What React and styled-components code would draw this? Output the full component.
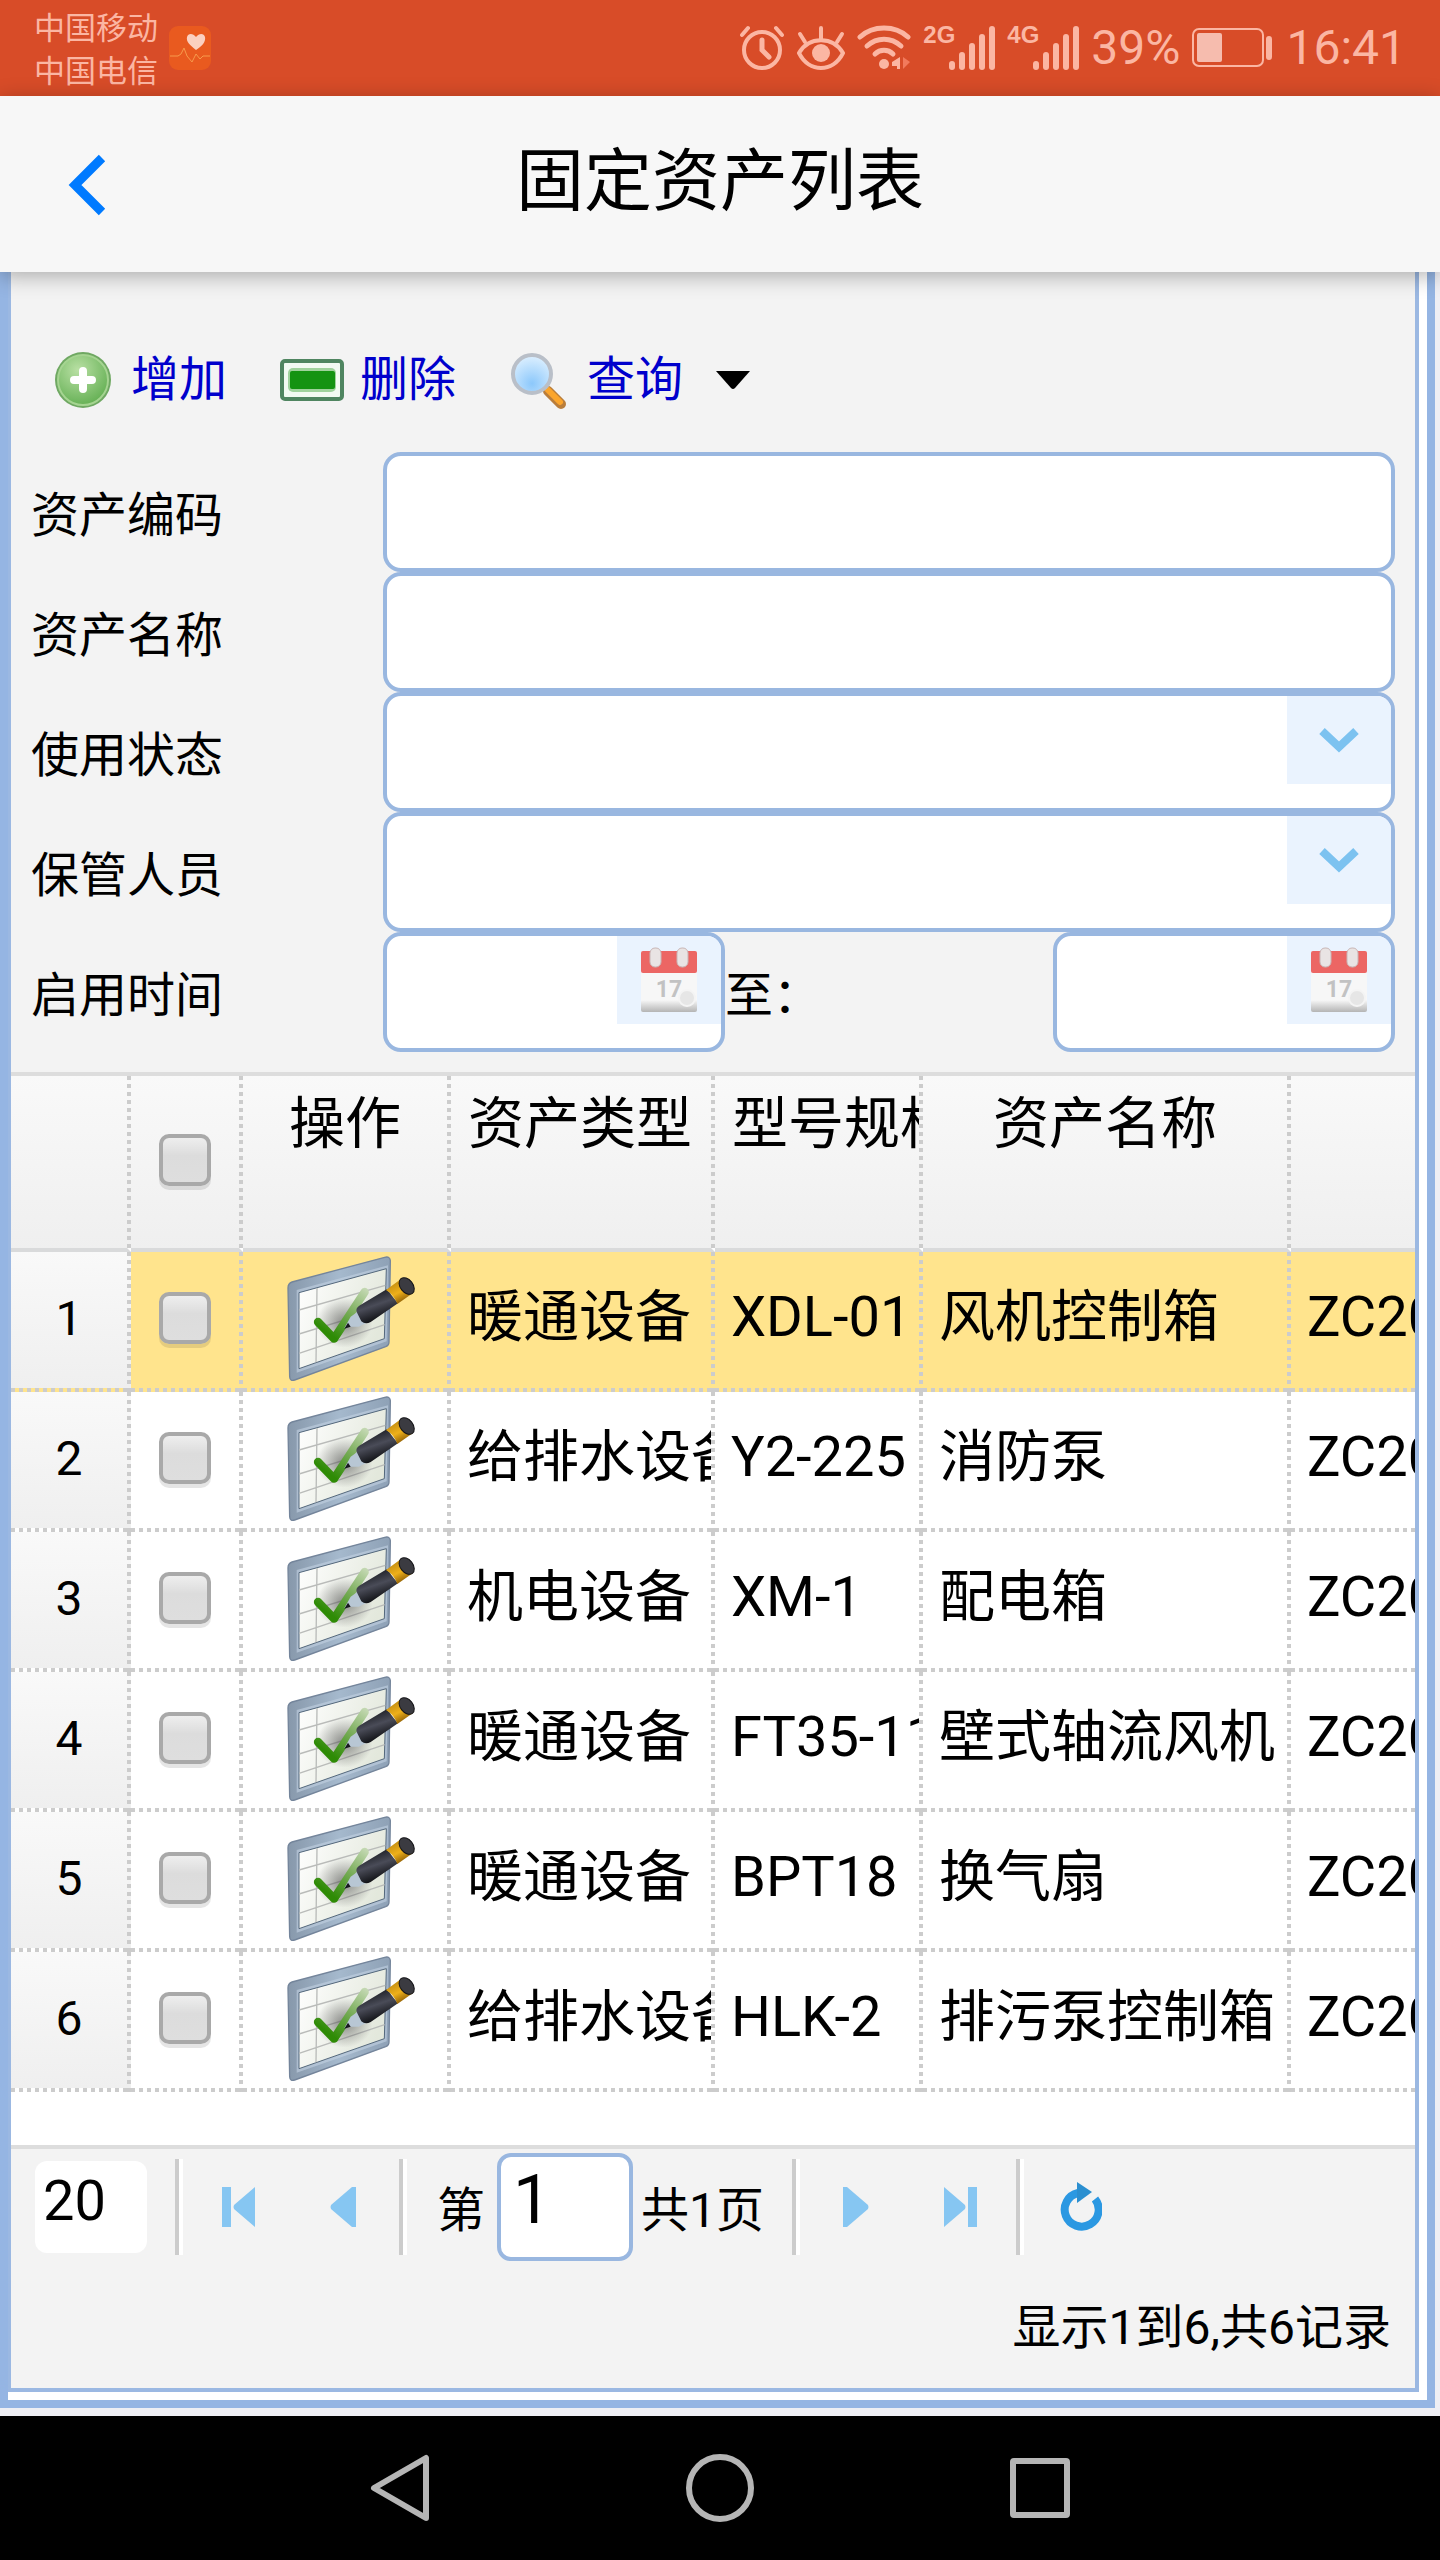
import styled, { createGlobalStyle, css } from "styled-components";

const ROWS = [
  { type: "暖通设备", model: "XDL-01", name: "风机控制箱", code: "ZC20" },
  { type: "给排水设备", model: "Y2-225", name: "消防泵", code: "ZC20" },
  { type: "机电设备", model: "XM-1", name: "配电箱", code: "ZC20" },
  { type: "暖通设备", model: "FT35-11", name: "壁式轴流风机", code: "ZC20" },
  { type: "暖通设备", model: "BPT18", name: "换气扇", code: "ZC20" },
  { type: "给排水设备", model: "HLK-2", name: "排污泵控制箱", code: "ZC20" },
];

export default function App() {
  return (
    <Page>
      <GlobalStyle />
      <SharedGradients />
      <StatusBar />
      <Header>
        <BackButton type="button" aria-label="返回">
          <svg width="40" height="64" viewBox="0 0 40 64" fill="none">
            <path d="M36 6 L9 33 L36 60" stroke="#007aff" strokeWidth="9" />
          </svg>
        </BackButton>
        <h1>固定资产列表</h1>
      </Header>
      <Body>
        <OuterPanel>
          <InnerPanel>
            <Toolbar />
            <SearchForm />
            <AssetGrid />
            <Pager />
          </InnerPanel>
        </OuterPanel>
      </Body>
      <NavBar />
    </Page>
  );
}

function StatusBar() {
  return (
    <StyledStatusBar>
      <Carriers>
        <span>中国移动</span>
        <span>中国电信</span>
      </Carriers>
      <svg width="44" height="46" viewBox="0 0 44 46">
        <rect x="1" y="1" width="42" height="44" rx="9" fill="#e95a1f" />
        <path
          d="M28 25 C22 20 18 17 19 12 C20 8 25 8 28 12 C31 8 36 8 37 12 C38 17 34 21 28 25Z"
          fill="#fbd0c0"
        />
        <path
          d="M2 31 H10 L13 29 L16 23 L19 31 L24 37 L28 29 L32 34 L35 31 H42"
          fill="none"
          stroke="#f79a4c"
          strokeWidth="1"
        />
      </svg>
      <StatusIcons>
        <svg width="46" height="46" viewBox="0 0 46 46" fill="none" stroke="#fbb6a3" strokeWidth="4" strokeLinecap="round">
          <circle cx="23" cy="25" r="18" />
          <path d="M23 15 V25 L30 32" strokeWidth="5" />
          <path d="M3 10 L9 3 M37 3 L43 10" />
        </svg>
        <svg width="48" height="46" viewBox="0 0 48 46" fill="none" stroke="#fbb6a3" strokeWidth="4" strokeLinecap="round">
          <path d="M2 28 C12 11 36 11 46 28 C36 48 12 48 2 28Z" />
          <circle cx="24" cy="28" r="9" fill="#fbb6a3" stroke="none" />
          <path d="M24 3 V14 M3 9 L8 17 M45 9 L40 17" />
        </svg>
        <svg width="54" height="46" viewBox="0 0 54 46" fill="none" stroke="#fbb6a3" strokeWidth="5" strokeLinecap="round">
          <path d="M3 12 C16 0 38 0 51 12" />
          <path d="M10 21 C20 12 34 12 44 21" />
          <path d="M18 29 C23 24 31 24 36 29" />
          <circle cx="27" cy="39" r="5" fill="#fbb6a3" stroke="none" />
          <path d="M43 32 V44 H40 V41 H35 V37Z" fill="#fbb6a3" stroke="none" />
          <path d="M46 32 L53 37 L46 44Z" fill="#f27a5c" stroke="none" />
        </svg>
        <Signal label="2G" />
        <Signal label="4G" />
        <span>39%</span>
        <svg width="82" height="40" viewBox="0 0 82 40">
          <rect x="1" y="1" width="70" height="37" rx="6" fill="none" stroke="#fbb6a3" strokeWidth="2" />
          <rect x="5" y="5" width="25" height="29" rx="2" fill="#f6bcae" />
          <rect x="74" y="8" width="6" height="24" rx="3" fill="#fbb6a3" />
        </svg>
        <time>16:41</time>
      </StatusIcons>
    </StyledStatusBar>
  );
}

function Signal({ label }) {
  return (
    <SignalWrap>
      <small>{label}</small>
      <svg width="46" height="46" viewBox="0 0 46 46" fill="#fbb6a3">
        <rect x="0" y="36" width="6" height="9" rx="3" />
        <rect x="10" y="27" width="6" height="18" rx="3" />
        <rect x="20" y="18" width="6" height="27" rx="3" />
        <rect x="30" y="9" width="6" height="36" rx="3" />
        <rect x="40" y="1" width="6" height="44" rx="3" />
      </svg>
    </SignalWrap>
  );
}

function Toolbar() {
  return (
    <StyledToolbar>
      <a href="#add">
        <svg width="56" height="60" viewBox="0 0 56 60">
          <circle cx="28" cy="30" r="28" fill="#6fa862" />
          <circle cx="28" cy="30" r="25" fill="url(#addGreen)" stroke="#a5d491" strokeWidth="2" />
          <path d="M28 21 V39 M19 30 H37" stroke="#fff" strokeWidth="8" strokeLinecap="round" />
        </svg>
        增加
      </a>
      <a href="#delete">
        <svg width="64" height="42" viewBox="0 0 64 42">
          <rect x="2" y="2" width="60" height="38" rx="3" fill="#f2faf2" stroke="#4f8560" strokeWidth="4" />
          <rect x="8" y="9" width="48" height="24" rx="5" fill="#9fd29c" />
          <rect x="10" y="12" width="45" height="18" rx="2" fill="#149312" />
        </svg>
        删除
      </a>
      <a href="#search">
        <svg width="58" height="60" viewBox="0 0 58 60">
          <path d="M39 41 L52 54" stroke="#b97d3b" strokeWidth="10" strokeLinecap="round" />
          <path d="M39 40 L51 52" stroke="#fba52c" strokeWidth="6" strokeLinecap="round" />
          <circle cx="23" cy="24" r="19" fill="url(#lensBlue)" stroke="#b9bfc8" strokeWidth="4" />
        </svg>
        查询
        <svg className="caret" width="36" height="20" viewBox="0 0 36 20">
          <path d="M1 1 H35 L20 18 Q18 20 16 18Z" fill="#000" />
        </svg>
      </a>
    </StyledToolbar>
  );
}

function SearchForm() {
  return (
    <StyledForm onSubmit={(e) => e.preventDefault()}>
      <FormRow>
        <label htmlFor="code">资产编码</label>
        <Field>
          <input id="code" type="text" />
        </Field>
      </FormRow>
      <FormRow>
        <label htmlFor="name">资产名称</label>
        <Field>
          <input id="name" type="text" />
        </Field>
      </FormRow>
      <FormRow>
        <label htmlFor="state">使用状态</label>
        <Field>
          <select id="state">
            <option></option>
          </select>
          <ComboArrow />
        </Field>
      </FormRow>
      <FormRow>
        <label htmlFor="keeper">保管人员</label>
        <Field>
          <select id="keeper">
            <option></option>
          </select>
          <ComboArrow />
        </Field>
      </FormRow>
      <FormRow>
        <label htmlFor="from">启用时间</label>
        <DateRange>
          <Field $date>
            <input id="from" type="text" />
            <CalendarButton />
          </Field>
          <label htmlFor="to">至：</label>
          <Field $date>
            <input id="to" type="text" />
            <CalendarButton />
          </Field>
        </DateRange>
      </FormRow>
    </StyledForm>
  );
}

function ComboArrow() {
  return (
    <Addon as="span">
      <svg width="44" height="30" viewBox="0 0 44 30" fill="none">
        <path d="M5 6 L22 22 L39 6" stroke="#7cc2f0" strokeWidth="8" />
      </svg>
    </Addon>
  );
}

function CalendarButton() {
  return (
    <Addon type="button" aria-label="选择日期">
      <svg width="60" height="66" viewBox="0 0 60 66">
        <rect x="2" y="5" width="56" height="60" rx="2" fill="url(#calPaper)" />
        <rect x="2" y="4" width="56" height="22" rx="2" fill="#ec6664" />
        <rect x="11" y="1" width="11" height="19" rx="5" fill="#e9e4e4" stroke="#c9b6b6" />
        <rect x="38" y="1" width="11" height="19" rx="5" fill="#e9e4e4" stroke="#c9b6b6" />
        <text x="30" y="50" textAnchor="middle" fontSize="23" fontWeight="bold" fill="#c2c2c2">
          17
        </text>
        <circle cx="48" cy="51" r="8" fill="#e6e6e6" stroke="#f4f4f4" strokeWidth="2" />
      </svg>
    </Addon>
  );
}

function AssetGrid() {
  return (
    <GridWrap>
      <Table>
        <colgroup>
          <col width="120" />
          <col width="112" />
          <col width="208" />
          <col width="264" />
          <col width="208" />
          <col width="368" />
          <col />
        </colgroup>
        <thead>
          <tr>
            <HeadCell />
            <HeadCell $middle>
              <Checkbox type="checkbox" aria-label="全选" />
            </HeadCell>
            <HeadCell>操作</HeadCell>
            <HeadCell $left>资产类型</HeadCell>
            <HeadCell $left>型号规格</HeadCell>
            <HeadCell>资产名称</HeadCell>
            <HeadCell />
          </tr>
        </thead>
        <tbody>
          {ROWS.map((row, i) => (
            <Row key={i} $selected={i === 0}>
              <NumberCell>{i + 1}</NumberCell>
              <Cell $center>
                <Checkbox type="checkbox" aria-label={row.name} />
              </Cell>
              <Cell $center>
                <EditButton type="button" aria-label="编辑">
                  <EditIcon />
                </EditButton>
              </Cell>
              <Cell>{row.type}</Cell>
              <Cell>{row.model}</Cell>
              <Cell>{row.name}</Cell>
              <Cell>{row.code}</Cell>
            </Row>
          ))}
        </tbody>
      </Table>
    </GridWrap>
  );
}

function EditIcon() {
  return (
    <svg width="130" height="128" viewBox="50 50 390 384">
      <path
        d="M56 146 Q56 132 68 128 L346 54 Q362 50 363 64 L359 308 Q359 318 349 322 L76 422 Q62 427 61 412Z"
        fill="url(#frameBlue)"
        stroke="#74859b"
        strokeWidth="4"
      />
      <path d="M82 152 L356 78 L352 306 L82 400Z" fill="#c3d2e2" opacity="0.6" />
      <path d="M89 160 L351 88 L345 298 L89 388Z" fill="url(#boardWhite)" stroke="#54687c" strokeWidth="3" />
      <path
        d="M143 146 L140 369 M89 212 L348 138 M89 284 L347 205 M89 342 L346 256"
        stroke="#b9bbb9"
        strokeWidth="4"
        fill="none"
      />
      <ellipse cx="225" cy="250" rx="85" ry="75" fill="url(#softShadow)" />
      <path
        d="M146 248 L194 298 L286 158"
        fill="none"
        stroke="url(#checkGreen)"
        strokeWidth="25"
        strokeLinecap="round"
        strokeLinejoin="round"
      />
      <path d="M225 266 L244 232 L264 218 L292 250 L268 262 L240 262Z" fill="#b8c7d4" />
      <path d="M225 268 L236 250 L244 262Z" fill="#15181c" />
      <path d="M262 218 Q258 206 272 198 L352 150 L386 192 L304 248 Q288 256 276 246Z" fill="url(#penDark)" />
      <path d="M350 152 L394 120 L430 162 L384 194 Q374 166 350 152Z" fill="url(#penGold)" />
      <ellipse cx="412" cy="140" rx="19" ry="28" transform="rotate(-38 412 140)" fill="#3b3b41" stroke="#141417" strokeWidth="3" />
    </svg>
  );
}

function Pager() {
  return (
    <StyledPager>
      <PagerControls>
        <PageSize aria-label="每页条数" defaultValue="20">
          <option>20</option>
        </PageSize>
        <Separator />
        <PagerButton type="button" aria-label="首页">
          <svg width="36" height="42" viewBox="0 0 36 42" fill="#86c6f2">
            <path d="M1 1 H10 V41 H1Z M34 1 V41 L13 23 Q12 21 13 19Z" />
          </svg>
        </PagerButton>
        <PagerButton type="button" aria-label="上一页">
          <svg width="36" height="42" viewBox="0 0 36 42" fill="#86c6f2">
            <path d="M31 1 V41 H27 L6 23 Q5 21 6 19 L27 1Z" />
          </svg>
        </PagerButton>
        <Separator />
        <label htmlFor="page">第</label>
        <PageInput id="page" type="text" defaultValue="1" />
        <span>共1页</span>
        <Separator />
        <PagerButton type="button" aria-label="下一页">
          <svg width="36" height="42" viewBox="0 0 36 42" fill="#86c6f2">
            <path d="M5 1 V41 H9 L30 23 Q31 21 30 19 L9 1Z" />
          </svg>
        </PagerButton>
        <PagerButton type="button" aria-label="末页">
          <svg width="36" height="42" viewBox="0 0 36 42" fill="#86c6f2">
            <path d="M26 1 H35 V41 H26Z M2 1 V41 L23 23 Q24 21 23 19Z" />
          </svg>
        </PagerButton>
        <Separator />
        <PagerButton type="button" aria-label="刷新">
          <svg width="44" height="50" viewBox="0 0 44 50" fill="none">
            <path d="M20 11 A17 17 0 1 0 37 17" stroke="#2b98e2" strokeWidth="8" />
            <path d="M19 0 L34 10 L19 21Z" fill="#2b8fd0" />
          </svg>
        </PagerButton>
      </PagerControls>
      <p>显示1到6,共6记录</p>
    </StyledPager>
  );
}

function NavBar() {
  return (
    <StyledNavBar>
      <button type="button" aria-label="后退">
        <svg width="70" height="70" viewBox="0 0 70 70">
          <path d="M9 35 L61 5 V65Z" />
        </svg>
      </button>
      <button type="button" aria-label="主屏幕">
        <svg width="70" height="70" viewBox="0 0 70 70">
          <circle cx="35" cy="35" r="31" />
        </svg>
      </button>
      <button type="button" aria-label="最近任务">
        <svg width="70" height="70" viewBox="0 0 70 70">
          <rect x="8" y="8" width="54" height="54" rx="1" />
        </svg>
      </button>
    </StyledNavBar>
  );
}

// gradients used by several icons, kept in one place so ids stay unique
function SharedGradients() {
  return (
    <HiddenSvg width="0" height="0" aria-hidden="true">
      <defs>
        <radialGradient id="addGreen" cx="0.4" cy="0.3" r="0.8">
          <stop offset="0" stopColor="#b9e0a4" />
          <stop offset="1" stopColor="#5cab4c" />
        </radialGradient>
        <radialGradient id="lensBlue" cx="0.5" cy="0.75" r="0.8">
          <stop offset="0" stopColor="#8cc8fb" />
          <stop offset="1" stopColor="#e4f3ff" />
        </radialGradient>
        <linearGradient id="calPaper" x1="0" y1="0" x2="0" y2="1">
          <stop offset="0.8" stopColor="#f7f7f7" />
          <stop offset="1" stopColor="#b4b4b4" />
        </linearGradient>
        <linearGradient id="frameBlue" x1="0" y1="0" x2="1" y2="0">
          <stop offset="0" stopColor="#8798ab" />
          <stop offset="0.5" stopColor="#a5b9cd" />
          <stop offset="1" stopColor="#8ea1b6" />
        </linearGradient>
        <linearGradient id="boardWhite" x1="0" y1="0" x2="1" y2="0.4">
          <stop offset="0" stopColor="#ffffff" />
          <stop offset="1" stopColor="#e3e8dc" />
        </linearGradient>
        <radialGradient id="softShadow">
          <stop offset="0" stopColor="#444" stopOpacity="0.6" />
          <stop offset="1" stopColor="#444" stopOpacity="0" />
        </radialGradient>
        <linearGradient id="checkGreen" gradientUnits="userSpaceOnUse" x1="190" y1="290" x2="290" y2="150">
          <stop offset="0" stopColor="#2e8b05" />
          <stop offset="0.5" stopColor="#77ac57" />
          <stop offset="1" stopColor="#c3d8b2" />
        </linearGradient>
        <linearGradient id="penDark" x1="0.3" y1="0.2" x2="0.6" y2="0.9">
          <stop offset="0" stopColor="#25272e" />
          <stop offset="0.4" stopColor="#4a4c58" />
          <stop offset="1" stopColor="#0c0d10" />
        </linearGradient>
        <linearGradient id="penGold" x1="0.2" y1="0.1" x2="0.7" y2="1">
          <stop offset="0" stopColor="#c08a10" />
          <stop offset="0.5" stopColor="#eeb01a" />
          <stop offset="1" stopColor="#7a4c00" />
        </linearGradient>
      </defs>
    </HiddenSvg>
  );
}

const GlobalStyle = createGlobalStyle`
  * {
    box-sizing: border-box;
  }
  body {
    margin: 0;
    background: #efeff4;
    color: #000;
    font-family: Roboto, "Noto Sans CJK SC", sans-serif;
  }
  button, input, select {
    font-family: inherit;
    color: inherit;
    margin: 0;
  }
  button {
    border: none;
    background: none;
    padding: 0;
    cursor: pointer;
  }
  svg {
    display: block;
    flex-shrink: 0;
  }
`;

const HiddenSvg = styled.svg`
  position: absolute;
`;

const Page = styled.div`
  min-height: 100vh;
  display: flex;
  flex-direction: column;
`;

const StyledStatusBar = styled.div`
  height: 96px;
  flex-shrink: 0;
  display: flex;
  align-items: center;
  gap: 10px;
  padding: 0 34px;
  background: #d84c28;
  color: #fbb6a3;
`;

const Carriers = styled.div`
  display: flex;
  flex-direction: column;
  padding-top: 4px;
  font-size: 31px;
  line-height: 43px;
`;

const StatusIcons = styled.div`
  margin-left: auto;
  display: flex;
  align-items: center;
  gap: 12px;
  font-size: 48px;
  line-height: 56px;
`;

const SignalWrap = styled.div`
  display: flex;
  align-items: flex-start;
  small {
    width: 26px;
    font-family: "Liberation Sans Narrow", "Liberation Sans", sans-serif;
    font-size: 24px;
    line-height: 20px;
    font-weight: bold;
  }
`;

const Header = styled.header`
  position: relative;
  z-index: 1;
  height: 176px;
  flex-shrink: 0;
  display: grid;
  grid-template-columns: 172px 1fr 172px;
  align-items: center;
  background: #f7f7f7;
  box-shadow: 0 4px 20px rgba(0, 0, 0, 0.3);
  h1 {
    margin: 0;
    padding-bottom: 4px;
    font-size: 68px;
    line-height: 80px;
    font-weight: 400;
    text-align: center;
  }
`;

const BackButton = styled.button`
  justify-self: start;
  padding-left: 66px;
`;

const Body = styled.main`
  flex: 1;
  display: flex;
  flex-direction: column;
  padding: 0 5px 8px 0;
`;

const OuterPanel = styled.div`
  flex: 1;
  display: flex;
  flex-direction: column;
  padding: 0 8px 8px 0;
  border: 8px solid #95b5e3;
  border-top: none;
  background: #fff;
`;

const InnerPanel = styled.div`
  flex: 1;
  display: flex;
  flex-direction: column;
  border: 4px solid #9bb8e2;
  border-top: none;
  border-left-width: 3px;
  background: #f3f3f3;
`;

const StyledToolbar = styled.div`
  display: flex;
  gap: 53px;
  padding: 72px 38px 36px 44px;
  a {
    display: flex;
    align-items: center;
    gap: 20px;
    height: 72px;
    color: #0000cc;
    font-size: 48px;
    line-height: 64px;
    text-decoration: none;
  }
  a:nth-child(2) {
    gap: 16px;
  }
  .caret {
    margin-left: 12px;
  }
`;

const StyledForm = styled.form`
  padding: 0 20px 20px;
  font-size: 48px;
  line-height: 64px;
`;

const FormRow = styled.div`
  display: grid;
  grid-template-columns: 352px 1fr;
  align-items: center;
  > label {
    padding-top: 8px;
  }
`;

const Field = styled.div`
  position: relative;
  display: flex;
  height: 120px;
  width: ${({ $date }) => ($date ? "342px" : "auto")};
  border: 4px solid #99b7e0;
  border-radius: 18px;
  background: #fff;
  overflow: hidden;
  input,
  select {
    appearance: none;
    flex: 1;
    min-width: 0;
    padding: 0 16px;
    border: none;
    outline: none;
    background: transparent;
    font-size: 48px;
  }
`;

const Addon = styled.button`
  display: flex;
  align-items: center;
  justify-content: center;
  width: 104px;
  height: 88px;
  background: #eaf3fe;
  pointer-events: ${({ as }) => (as === "span" ? "none" : "auto")};
`;

const DateRange = styled.div`
  display: flex;
  justify-content: space-between;
  align-items: center;
  > label {
    flex: 1;
    padding-top: 8px;
  }
`;

const GridWrap = styled.div`
  flex: 1;
  overflow: hidden;
  background: #fff;
  border-top: 4px solid #ddd;
`;

const Table = styled.table`
  width: 100%;
  table-layout: fixed;
  border-collapse: separate;
  border-spacing: 0;
  font-size: 56px;
  line-height: 64px;
`;

// square dots, 4px on and 4px off
const dotRight = css`
  repeating-linear-gradient(#ccc 0 4px, transparent 4px 8px) right / 4px 100% no-repeat border-box
`;
const dotBottom = css`
  repeating-linear-gradient(90deg, #ccc 0 4px, transparent 4px 8px) bottom / 100% 4px no-repeat border-box
`;

// the transparent right border keeps clipped text off the dots
const HeadCell = styled.th`
  height: 176px;
  padding: ${({ $middle }) => ($middle ? "0" : "16px 0 0")};
  padding-left: ${({ $left }) => ($left ? "17px" : "0")};
  border-right: 4px solid transparent;
  border-bottom: 4px solid #d9dadb;
  background: ${dotRight}, linear-gradient(#f9f9f9, #efefef) border-box;
  font-weight: 400;
  text-align: ${({ $left }) => ($left ? "left" : "center")};
  vertical-align: ${({ $middle }) => ($middle ? "middle" : "top")};
  white-space: nowrap;
  overflow: hidden;
  &:last-child {
    border-right: none;
    background: linear-gradient(#f9f9f9, #efefef);
  }
`;

const Cell = styled.td`
  height: 140px;
  padding: ${({ $center }) => ($center ? "0 0 4px" : "0 0 10px 16px")};
  border-right: 4px solid transparent;
  background: ${dotRight}, ${dotBottom};
  text-align: ${({ $center }) => ($center ? "center" : "left")};
  vertical-align: middle;
  white-space: nowrap;
  overflow: hidden;
  &:last-child {
    border-right: none;
    background: ${dotBottom};
  }
`;

const NumberCell = styled(Cell)`
  padding: 0 0 6px;
  background: ${dotRight}, ${dotBottom},
    linear-gradient(#f9f9f9, #efefef) top / 100% 136px no-repeat border-box;
  font-size: 48px;
  text-align: center;
`;

const Row = styled.tr`
  background: ${({ $selected }) => ($selected ? "#ffe48d" : "#fff")};
`;

const Checkbox = styled.input`
  appearance: none;
  display: block;
  width: 52px;
  height: 52px;
  && {
    margin: 0 auto 4px;
  }
  border: 4px solid #a9a9a9;
  border-radius: 10px;
  background: linear-gradient(#eee, #dcdcdc 40%, #dedede);
  box-shadow: 0 4px 0 rgba(0, 0, 0, 0.1);
`;

const EditButton = styled.button`
  display: block;
  && {
    margin: 0 auto;
  }
  padding-left: 12px;
`;

const StyledPager = styled.div`
  padding: 4px 24px 20px;
  border-top: 4px solid #ddd;
  font-size: 48px;
  line-height: 64px;
  p {
    margin: 35px 0 8px;
    text-align: right;
  }
`;

const PagerControls = styled.div`
  display: flex;
  align-items: center;
  label {
    padding: 8px 12px 0 30px;
  }
  span {
    padding: 8px 20px 0 8px;
  }
`;

const PageSize = styled.select`
  appearance: none;
  width: 112px;
  height: 92px;
  padding: 0 0 12px 8px;
  border: none;
  border-radius: 12px;
  background: #fff;
  font-size: 56px;
  && {
    margin-right: 20px;
  }
`;

const Separator = styled.i`
  width: 8px;
  height: 96px;
  margin-left: 8px;
  border-left: 4px solid #ccc;
  border-right: 4px solid #fff;
`;

const PagerButton = styled.button`
  display: flex;
  align-items: center;
  justify-content: center;
  width: 104px;
  height: 96px;
  padding-left: 8px;
`;

const PageInput = styled.input`
  width: 136px;
  height: 108px;
  padding: 0 12px 14px;
  border: 4px solid #99b7e0;
  border-radius: 14px;
  background: #fff;
  font-size: 68px;
  line-height: 80px;
`;

const StyledNavBar = styled.nav`
  height: 144px;
  flex-shrink: 0;
  display: flex;
  justify-content: center;
  align-items: center;
  gap: 250px;
  background: #000;
  svg {
    fill: none;
    stroke: #b5b5b5;
    stroke-width: 6;
    stroke-linejoin: round;
  }
`;
